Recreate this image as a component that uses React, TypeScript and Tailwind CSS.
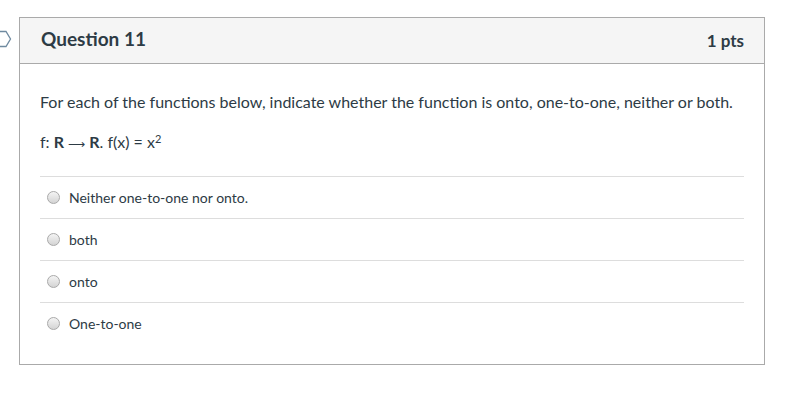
import React from 'react';

const answers = ['Neither one-to-one nor onto.', 'both', 'onto', 'One-to-one'];

const Radio: React.FC = () => (
    <span className="inline-block w-[13px] h-[13px] rounded-full border border-[#a9a9a9] bg-gradient-to-b from-[#f4f4f4] to-[#d4d4d4] shrink-0"></span>
);

export default function App() {
    return (
        <div className="relative w-[806px] h-[402px] bg-white" style={{ fontFamily: 'Lato, "Noto Sans", sans-serif' }}>
            {/* bookmark flag at left edge */}
            <svg className="absolute left-0 top-[30px]" width="12" height="18" viewBox="0 0 12 18">
                <path d="M-4 1.5 H6 L10.5 9 L6 16.5 H-4" fill="none" stroke="#6f8aa0" strokeWidth="1.3" />
            </svg>

            <div className="absolute left-[19px] top-[17px] w-[746px] h-[348px] border border-[#aaaaaa] flex flex-col">
                {/* Header */}
                <div className="h-[46px] bg-[#f5f5f5] border-b border-[#aaaaaa] flex items-center justify-between pl-[21px] pr-[20px] text-[#2d3b45]">
                    <h2 className="text-[19px] font-bold -mt-[2px]">Question 11</h2>
                    <span className="text-[17px] font-bold">1 pts</span>
                </div>

                {/* Content */}
                <div className="px-[20px] pt-[28px] text-[#2d3b45]">
                    <p className="text-[16px] leading-[20px]">
                        For each of the functions below, indicate whether the function is onto, one-to-one, neither or both.
                    </p>
                    <p className="text-[16px] leading-[20px] mt-[20px]">
                        f: <b>R</b> <span className="text-[12px]">⟶</span> <b>R</b>. f(x) = x<sup className="text-[11px]">2</sup>
                    </p>

                    <div className="mt-[22px]">
                        {answers.map((a) => (
                            <div key={a} className="h-[42px] border-t border-[#dddddd] flex items-center gap-[9px] pl-[7px]">
                                <Radio />
                                <span className="text-[14px] text-[#2d3b45]">{a}</span>
                            </div>
                        ))}
                    </div>
                </div>
            </div>
        </div>
    );
}
